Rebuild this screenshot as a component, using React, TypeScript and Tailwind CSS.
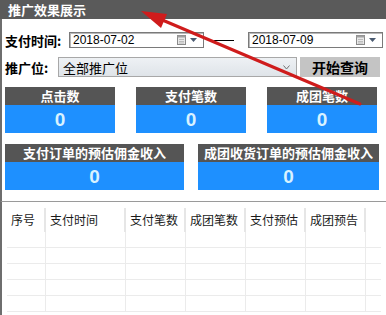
import React from 'react';

const cjk = { fontFamily: '"Noto Sans CJK SC", "Liberation Sans", sans-serif' };
const latin = { fontFamily: '"Liberation Sans", Arial, sans-serif' };

const columns = [
  { label: '序号', width: 'w-[39px]' },
  { label: '支付时间', width: 'w-[80px]' },
  { label: '支付笔数', width: 'w-[60px]' },
  { label: '成团笔数', width: 'w-[60px]' },
  { label: '支付预估', width: 'w-[60px]' },
  { label: '成团预告', width: 'w-[60px]' },
];

function CalendarIcon() {
  return (
    <div className="flex items-center gap-[4px]">
      <svg width="9" height="10" viewBox="0 0 9 10">
        <rect x="0.5" y="0.5" width="8" height="9" fill="#e8e8e8" stroke="#8a8a8a" />
        <rect x="0.5" y="0.5" width="8" height="2" fill="#a0a0a0" />
        <path d="M2 4.5h5M2 6.5h5M2 8h5" stroke="#b0b0b0" strokeWidth="0.8" />
      </svg>
      <svg width="7" height="4" viewBox="0 0 7 4">
        <path d="M0 0h7L3.5 4z" fill="#4a5a70" />
      </svg>
    </div>
  );
}

function DateInput({ value }: { value: string }) {
  return (
    <div className="w-[135px] h-[16px] border border-[#7a7a7a] bg-white flex items-center justify-between pl-[3px] pr-[6px] shadow-[inset_1px_1px_0_#b8b8b8]">
      <span className="text-[12px] text-black leading-none" style={latin}>
        {value}
      </span>
      <CalendarIcon />
    </div>
  );
}

function StatBox({ title, width }: { title: string; width: string }) {
  return (
    <div className={`${width} flex flex-col`}>
      <div className="h-[18px] bg-[#555555] text-white text-[13px] font-bold leading-[18px] text-center" style={cjk}>
        {title}
      </div>
      <div className="h-[28px] bg-[#1e90ff] flex items-center justify-center text-[19px] font-bold text-[#d8f2ff] leading-none" style={latin}>
        0
      </div>
    </div>
  );
}

export default function App() {
  return (
    <div className="relative w-[386px] h-[315px] overflow-hidden bg-white" style={cjk}>
      <div className="h-[19px] bg-[#5a5a5a] pl-[8px] text-white text-[13px] font-bold leading-[19px]">
        推广效果展示
      </div>

      <div className="border-l-2 border-[#6e6e6e] h-[296px] flex flex-col">
        <div className="flex items-center pl-[3px] mt-[13px] h-[16px]">
          <span className="w-[64px] text-[13px] font-bold text-black leading-none">支付时间:</span>
          <DateInput value="2018-07-02" />
          <div className="w-[20px] h-px bg-black ml-[10px] mr-[14px]" />
          <DateInput value="2018-07-09" />
        </div>

        <div className="flex items-center pl-[3px] mt-[9px] h-[20px]">
          <span className="w-[53px] text-[13px] font-bold text-black leading-none">推广位:</span>
          <div className="w-[239px] h-[20px] border border-[#a8a8a8] bg-gradient-to-b from-[#eef1f4] to-[#dfe4e9] flex items-center justify-between pl-[4px] pr-[6px]">
            <span className="text-[13px] text-black leading-none">全部推广位</span>
            <svg width="7" height="5" viewBox="0 0 7 5">
              <path d="M0.5 0.5L3.5 4L6.5 0.5" fill="none" stroke="#707070" strokeWidth="1" />
            </svg>
          </div>
          <div className="ml-[3px] w-[80px] h-[20px] bg-[#c4c4c4] flex items-center justify-center text-[14px] font-bold text-black leading-none">
            开始查询
          </div>
        </div>

        <div className="flex pl-[3px] mt-[10px] gap-[21px]">
          <StatBox title="点击数" width="w-[110px]" />
          <StatBox title="支付笔数" width="w-[110px]" />
          <StatBox title="成团笔数" width="w-[110px]" />
        </div>

        <div className="flex pl-[3px] mt-[11px] gap-[14px]">
          <StatBox title="支付订单的预估佣金收入" width="w-[179px]" />
          <StatBox title="成团收货订单的预估佣金收入" width="w-[181px]" />
        </div>

        <div className="mt-[11px] border-t border-[#9a9a9a] -ml-[2px] pl-[5px] pt-[6px] border-l-2 border-l-[#6e6e6e] flex-1">
          <div className="w-[374px]">
            <div className="flex h-[24px]">
              {columns.map((c) => (
                <div
                  key={c.label}
                  className={`${c.width} border-r-2 border-[#e6e6e6] pl-[4px] flex items-center text-[12px] text-[#1a1a1a] leading-none`}
                >
                  {c.label}
                </div>
              ))}
              <div className="flex-1" />
            </div>
            {[0, 1, 2, 3, 4].map((r) => (
              <div key={r} className="flex h-[16px] border-b border-[#ebebeb]">
                {columns.map((c) => (
                  <div key={c.label} className={`${c.width} border-r border-[#ebebeb]`} />
                ))}
                <div className="flex-1" />
              </div>
            ))}
          </div>
        </div>
      </div>

      <svg className="absolute left-0 top-0 pointer-events-none" width="386" height="315" viewBox="0 0 386 315">
        <line x1="160" y1="19" x2="360" y2="104" stroke="#cf1c1c" strokeWidth="3" strokeLinecap="round" />
        <polygon points="141,11 167,14 161,28" fill="#cf1c1c" />
      </svg>
    </div>
  );
}
